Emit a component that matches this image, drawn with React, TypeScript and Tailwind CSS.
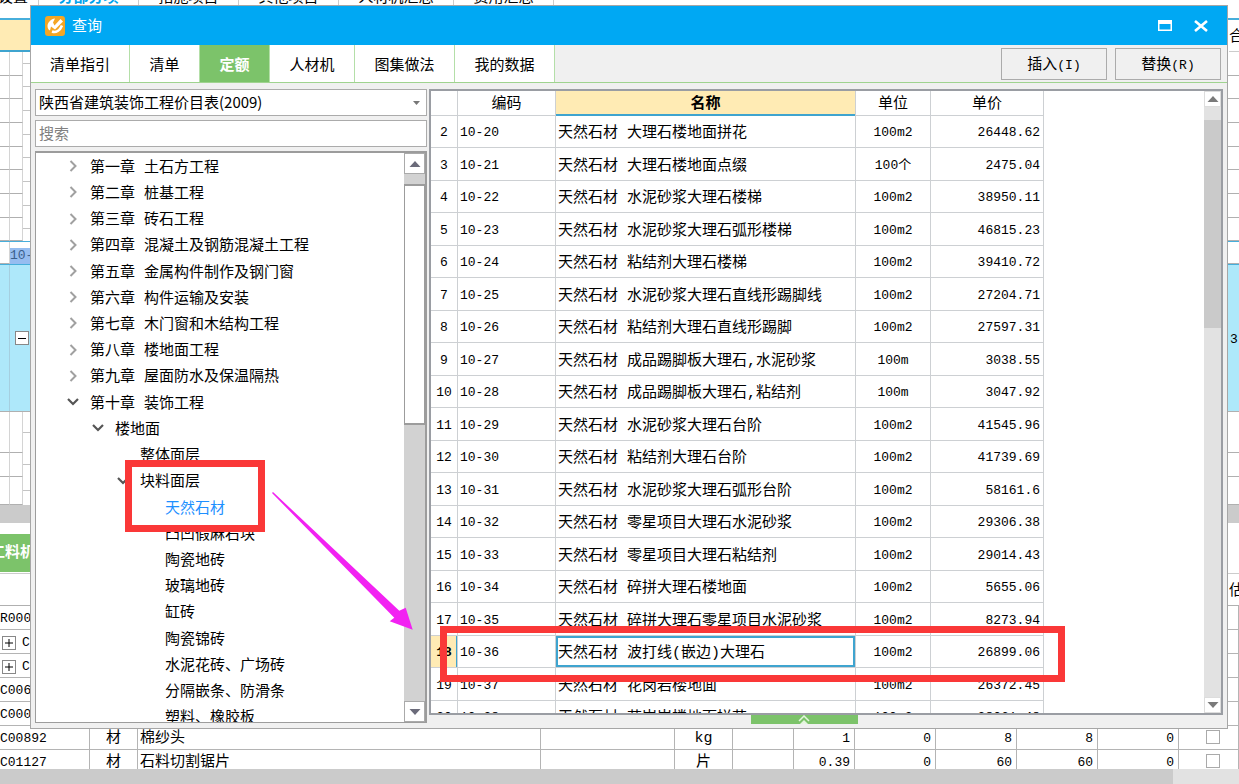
import { useState } from 'react';

type TreeItem = {
    label: string;
    level: number;
    state?: 'open' | 'closed';
};

const dialogTabs = [
    { name: '清单指引', width: 'w-[99px]' },
    { name: '清单', width: 'w-[70px]' },
    { name: '定额', width: 'w-[70px]' },
    { name: '人材机', width: 'w-[85px]' },
    { name: '图集做法', width: 'w-[100px]' },
    { name: '我的数据', width: 'w-[100px]' },
];

const treeItems: TreeItem[] = [
    { label: '第一章 土石方工程', level: 0, state: 'closed' },
    { label: '第二章 桩基工程', level: 0, state: 'closed' },
    { label: '第三章 砖石工程', level: 0, state: 'closed' },
    { label: '第四章 混凝土及钢筋混凝土工程', level: 0, state: 'closed' },
    { label: '第五章 金属构件制作及钢门窗', level: 0, state: 'closed' },
    { label: '第六章 构件运输及安装', level: 0, state: 'closed' },
    { label: '第七章 木门窗和木结构工程', level: 0, state: 'closed' },
    { label: '第八章 楼地面工程', level: 0, state: 'closed' },
    { label: '第九章 屋面防水及保温隔热', level: 0, state: 'closed' },
    { label: '第十章 装饰工程', level: 0, state: 'open' },
    { label: '楼地面', level: 1, state: 'open' },
    { label: '整体面层', level: 2 },
    { label: '块料面层', level: 2, state: 'open' },
    { label: '天然石材', level: 3 },
    { label: '凸凹假麻石块', level: 3 },
    { label: '陶瓷地砖', level: 3 },
    { label: '玻璃地砖', level: 3 },
    { label: '缸砖', level: 3 },
    { label: '陶瓷锦砖', level: 3 },
    { label: '水泥花砖、广场砖', level: 3 },
    { label: '分隔嵌条、防滑条', level: 3 },
    { label: '塑料、橡胶板', level: 3 },
];

const quotas = [
    { no: 2, code: '10-20', name: '天然石材 大理石楼地面拼花', unit: '100m2', price: '26448.62' },
    { no: 3, code: '10-21', name: '天然石材 大理石楼地面点缀', unit: '100个', price: '2475.04' },
    { no: 4, code: '10-22', name: '天然石材 水泥砂浆大理石楼梯', unit: '100m2', price: '38950.11' },
    { no: 5, code: '10-23', name: '天然石材 水泥砂浆大理石弧形楼梯', unit: '100m2', price: '46815.23' },
    { no: 6, code: '10-24', name: '天然石材 粘结剂大理石楼梯', unit: '100m2', price: '39410.72' },
    { no: 7, code: '10-25', name: '天然石材 水泥砂浆大理石直线形踢脚线', unit: '100m2', price: '27204.71' },
    { no: 8, code: '10-26', name: '天然石材 粘结剂大理石直线形踢脚', unit: '100m2', price: '27597.31' },
    { no: 9, code: '10-27', name: '天然石材 成品踢脚板大理石,水泥砂浆', unit: '100m', price: '3038.55' },
    { no: 10, code: '10-28', name: '天然石材 成品踢脚板大理石,粘结剂', unit: '100m', price: '3047.92' },
    { no: 11, code: '10-29', name: '天然石材 水泥砂浆大理石台阶', unit: '100m2', price: '41545.96' },
    { no: 12, code: '10-30', name: '天然石材 粘结剂大理石台阶', unit: '100m2', price: '41739.69' },
    { no: 13, code: '10-31', name: '天然石材 水泥砂浆大理石弧形台阶', unit: '100m2', price: '58161.6' },
    { no: 14, code: '10-32', name: '天然石材 零星项目大理石水泥砂浆', unit: '100m2', price: '29306.38' },
    { no: 15, code: '10-33', name: '天然石材 零星项目大理石粘结剂', unit: '100m2', price: '29014.43' },
    { no: 16, code: '10-34', name: '天然石材 碎拼大理石楼地面', unit: '100m2', price: '5655.06' },
    { no: 17, code: '10-35', name: '天然石材 碎拼大理石零星项目水泥砂浆', unit: '100m2', price: '8273.94' },
    { no: 18, code: '10-36', name: '天然石材 波打线(嵌边)大理石', unit: '100m2', price: '26899.06' },
    { no: 19, code: '10-37', name: '天然石材 花岗岩楼地面', unit: '100m2', price: '26372.45' },
    { no: 20, code: '10-38', name: '天然石材 花岗岩楼地面拼花', unit: '100m2', price: '28061.48' },
];

const materials = [
    { code: 'R000' },
    { code: 'C', expandable: true },
    { code: 'C', expandable: true },
    { code: 'C006' },
    { code: 'C000' },
    { code: 'C00892', type: '材', name: '棉纱头', unit: 'kg', values: ['1', '0', '8', '8', '0'] },
    { code: 'C01127', type: '材', name: '石料切割锯片', unit: '片', values: ['0.39', '0', '60', '60', '0'] },
];

const indents = ['pl-[31px]', 'pl-[56px]', 'pl-[81px]', 'pl-[106px]'];

const Chevron = ({ state }: { state?: 'open' | 'closed' }) => (
    <svg className="w-3 h-3 shrink-0" viewBox="0 0 12 12" fill="none">
        {state === 'closed' && <path d="M3.500 1L8.500 6L3.500 11" stroke="#a0a0a0" strokeWidth="2" />}
        {state === 'open' && <path d="M1 3L6 8L11 3" stroke="#555" strokeWidth="2.2" />}
    </svg>
);

const Triangle = ({ down, color }: { down?: boolean; color: string }) => (
    <svg className="w-3 h-2" viewBox="0 0 12 8" fill={color}>
        {down ? <path d="M0.5 1H11.5L6 7Z" /> : <path d="M0.5 7H11.5L6 1Z" />}
    </svg>
);

const SheetRow = ({ active }: { active?: boolean }) => (
    <div className={`flex min-h-0 ${active ? 'border-y border-[#47aedb]' : ''}`}>
        <div className="w-[10px] border-r border-b border-r-[#d4d4d4] border-b-[#b0b0b0]" />
        {active ? (
            <div className="w-5 self-end bg-[#96bdf0] text-[13px] text-[#3b5f8c] leading-4 overflow-hidden">10-</div>
        ) : (
            <>
                <div className="w-[13px] border-r border-b border-r-[#d4d4d4] border-b-[#b0b0b0]" />
                <div className="w-[7px]">
                    <div className="h-1/2 border-b border-[#c4c4c4]" />
                </div>
            </>
        )}
        <div className="flex-1 border-b border-[#b0b0b0]" />
    </div>
);

const Worksheet = () => (
    <div className="h-full flex flex-col">
        <nav className="flex shrink-0 -mt-3 h-8 leading-[22px] border-b-2 border-[#47aedb] text-center">
            <span className="w-[39px] border-r border-[#ccc] -indent-3">设置</span>
            <span className="w-[100px] border-r border-[#ccc] font-bold text-[#00a2ed]">分部分项</span>
            <span className="w-[100px] border-r border-[#ccc]">措施项目</span>
            <span className="w-[100px] border-r border-[#ccc]">其他项目</span>
            <span className="w-[115px] border-r border-[#ccc]">人材机汇总</span>
            <span className="w-[100px] border-r border-[#ccc]">费用汇总</span>
        </nav>
        <div className="flex justify-between shrink-0 h-8">
            <div className="w-[30px] bg-[#ffebb4] border-b-2 border-[#3fa4cf]" />
            <div className="w-[10px] overflow-hidden border-b border-[#ccc] leading-9">合</div>
        </div>
        <div className="grid auto-rows-fr shrink-0 h-[213px]">
            {[0, 1, 2, 3, 4, 5, 6, 7].map((row) => (
                <SheetRow key={row} />
            ))}
            <SheetRow active />
        </div>
        <div className="flex shrink-0 h-[147px] bg-[#aee8fa] items-center border-b border-[#b0b0b0]">
            <div className="w-[10px] h-full border-r border-[#a5cfe0]" />
            <button className="ml-[5px] w-[14px] h-[14px] bg-white border border-[#888] flex items-center justify-center" aria-label="折叠">
                <span className="w-2 h-px bg-black" />
            </button>
            <div className="ml-auto pt-1 w-[9px] overflow-hidden text-[13px]">3</div>
        </div>
        <div className="grid grid-rows-[41px_24px_28px] shrink-0">
            <SheetRow />
            <SheetRow />
            <SheetRow />
        </div>
        <div className="shrink-0 h-[18px] bg-[#cbcbcb]" />
        <div className="shrink-0 h-[51px] pt-[11px] border-b border-[#ccc]">
            <div className="w-[30px] h-[38px] bg-[#7cc36a] text-white font-bold leading-10 overflow-hidden whitespace-nowrap -indent-[10px]">工料机</div>
        </div>
        <div className="flex justify-end shrink-0 h-8 border-b border-[#b0b0b0]">
            <div className="w-[10px] overflow-hidden leading-9">估</div>
        </div>
        <div className="flex-1 min-h-0 overflow-hidden">
            <table className="w-full table-fixed border-separate border-spacing-0">
                <colgroup>
                    <col className="w-[90px]" />
                    <col className="w-[48px]" />
                    <col className="w-[403px]" />
                    <col className="w-[134px]" />
                    <col className="w-[58px]" />
                    <col className="w-[61px]" />
                    <col className="w-[61px]" />
                    <col className="w-[81px]" />
                    <col className="w-[81px]" />
                    <col className="w-[81px]" />
                    <col className="w-[81px]" />
                    <col />
                </colgroup>
                <tbody className="[&_td]:border-b [&_td]:border-r [&_td]:border-[#b4b4b4] [&_td]:h-6 [&_td]:pt-[2px] [&_td]:leading-5">
                    {materials.map((item, i) => (
                        <tr key={i}>
                            <td className="text-[13px]">
                                <div className="flex items-center">
                                    {item.expandable && (
                                        <button className="ml-[2px] mr-[6px] w-[14px] h-[14px] border border-[#888] bg-white flex items-center justify-center" aria-label="展开">
                                            <svg className="w-2 h-2" viewBox="0 0 8 8" stroke="#000"><path d="M0 4H8M4 0V8" /></svg>
                                        </button>
                                    )}
                                    {item.code}
                                </div>
                            </td>
                            <td className="text-center">{item.type}</td>
                            <td className="pl-[2px]">{item.name}</td>
                            <td />
                            <td className="text-center">{item.unit}</td>
                            <td />
                            {[0, 1, 2, 3, 4].map((n) => (
                                <td key={n} className="pr-1 text-right text-[13px]">{item.values?.[n]}</td>
                            ))}
                            <td>
                                {item.values && (
                                    <input type="checkbox" aria-label={item.name} className="block mb-1 ml-[27px] w-[14px] h-[14px] appearance-none border border-[#aaa] bg-white" />
                                )}
                            </td>
                        </tr>
                    ))}
                </tbody>
            </table>
        </div>
        <div className="shrink-0 h-[15px] bg-[#e2e2e2] pr-[66px]">
            <div className="h-full bg-[#cbcbcb]" />
        </div>
    </div>
);

const ChapterTree = () => {
    const [selected, setSelected] = useState('天然石材');

    return (
        <div className="flex-1 min-h-0 flex border border-t-2 border-[#9c9c9c] bg-white">
            <div className="flex-1 overflow-hidden">
                <ul className="grid auto-rows-fr h-[577px]">
                    {treeItems.map((item) => (
                        <li key={item.label} className={`flex items-center ${indents[item.level]}`}>
                            <button
                                className={`flex items-center gap-[11px] whitespace-nowrap leading-5 ${selected === item.label ? 'text-[#1e90ff]' : ''}`}
                                onClick={() => setSelected(item.label)}
                            >
                                <Chevron state={item.state} />
                                <span className="pt-[5px]">{item.label}</span>
                            </button>
                        </li>
                    ))}
                </ul>
            </div>
            <div className="w-[22px] flex flex-col bg-[#d2d2d2] border-r border-[#9c9c9c]">
                <button className="h-[21px] bg-white border border-[#aaa] flex items-center justify-center" aria-label="向上滚动">
                    <Triangle color="#6b6b7a" />
                </button>
                <div className="mt-[10px] h-[241px] bg-white border border-b-2 border-t-2 border-[#9c9c9c]" />
                <button className="mt-auto h-[21px] bg-white border border-[#aaa] flex items-center justify-center" aria-label="向下滚动">
                    <Triangle down color="#6b6b7a" />
                </button>
            </div>
        </div>
    );
};

const QuotaTable = () => (
    <div className="flex-1 min-w-0 flex justify-between border-2 border-[#9a9da3] bg-white overflow-hidden">
        <table className="w-[613px] table-fixed border-separate border-spacing-0 self-start whitespace-nowrap [&_td]:border-r [&_td]:border-b [&_td]:border-[#cdd0d3] [&_td]:leading-5">
            <thead>
                <tr className="h-[25px] [&_th]:font-normal [&_th]:leading-6 [&_th]:border-r [&_th]:border-b [&_th]:border-[#cdd0d3]">
                    <th className="w-[27px]" />
                    <th className="w-[98px]"><div className="h-6 leading-7">编码</div></th>
                    <th className="w-[300px] bg-[#ffebb4]">
                        <div className="-mb-px h-[25px] border-b-2 border-[#3fa4cf] font-bold leading-7">名称</div>
                    </th>
                    <th className="w-[75px]"><div className="h-6 leading-7">单位</div></th>
                    <th className="w-[113px]"><div className="h-6 leading-7">单价</div></th>
                </tr>
            </thead>
            <tbody>
                {quotas.map((row) => {
                    const active = row.no === 18;
                    return (
                        <tr key={row.no} className="odd:h-8 even:h-[33px] [&>td]:pt-[3px]">
                            <td className={active ? 'text-center text-[13px] font-bold bg-[#ffebb4] shadow-[inset_-1px_0_#3fa4cf]' : 'text-center text-[13px]'}>{row.no}</td>
                            <td className="pl-[2px] text-[13px]">{row.code}</td>
                            <td className={active ? 'pl-[2px] shadow-[inset_0_0_0_2px_#3fa4cf]' : 'pl-[2px]'}>
                                <div className="pt-[2px]">{row.name}</div>
                            </td>
                            <td className="text-center text-[13px]">{row.unit}</td>
                            <td className="pr-[3px] text-right text-[13px]">{row.price}</td>
                        </tr>
                    );
                })}
            </tbody>
        </table>
        <div className="w-[17px] flex flex-col bg-[#e2e2e2]">
            <button className="h-4 bg-white border border-[#ddd] flex items-center justify-center" aria-label="向上滚动">
                <Triangle color="#7a7a7a" />
            </button>
            <div className="mt-[13px] h-[208px] bg-[#cacaca]" />
            <button className="mt-auto h-4 bg-white border border-[#ddd] flex items-center justify-center" aria-label="向下滚动">
                <Triangle down color="#7a7a7a" />
            </button>
        </div>
    </div>
);

const QueryDialog = () => {
    const [tab, setTab] = useState('定额');

    return (
        <section className="absolute top-[5px] bottom-[55px] left-[30px] right-[11px] flex flex-col bg-[#f0f0f0] border border-[#a6a6a6]">
            <header className="flex items-center shrink-0 h-[39px] pl-[14px] pr-[19px] bg-[#00a8f3] text-white">
                <svg className="w-5 h-5" viewBox="0 0 20 20" fill="none">
                    <rect width="20" height="20" rx="3" fill="#f5a623" />
                    <path d="M2.500 9.500C3 6 6 3 10 2.500L8 6.500L9.500 9.500L15.500 3L18 5.500L10 13.500L6 10.500L5 14.500C3 13.500 2.500 12 2.500 9.500Z" fill="#fff" />
                    <path d="M7 15.500C11 17 15 14.500 17 9.500" stroke="#fff" strokeWidth="2.6" />
                </svg>
                <h1 className="ml-[7px] pt-[5px]">查询</h1>
                <button className="ml-auto" aria-label="最大化">
                    <svg className="w-[14px] h-[11px]" viewBox="0 0 14 11" fill="none">
                        <path d="M0 0H14V11H0ZM1.5 4V9.5H12.5V4Z" fill="#fff" fillRule="evenodd" />
                    </svg>
                </button>
                <button className="ml-[22px]" aria-label="关闭">
                    <svg className="w-[14px] h-3" viewBox="0 0 14 12" stroke="#fff" strokeWidth="2.6">
                        <path d="M1 1L13 11M13 1L1 11" />
                    </svg>
                </button>
            </header>
            <div className="flex items-center shrink-0 h-[38px] border-b border-[#9fd38f]">
                <div className="flex h-full" role="tablist">
                    {dialogTabs.map(({ name, width }) => (
                        <button
                            key={name}
                            role="tab"
                            aria-selected={tab === name}
                            className={`${width} pt-2 border-r border-[#b4dfa8] ${tab === name ? 'bg-[#7cc36a] text-white font-bold' : 'bg-white'}`}
                            onClick={() => setTab(name)}
                        >
                            {name}
                        </button>
                    ))}
                </div>
                <div className="ml-auto mr-[6px] flex gap-2">
                    <button className="w-[106px] h-8 pt-[5px] border border-[#ababab]">插入<span className="text-[13px]">(I)</span></button>
                    <button className="w-[106px] h-8 pt-[5px] border border-[#ababab]">替换<span className="text-[13px]">(R)</span></button>
                </div>
            </div>
            <div className="flex flex-1 min-h-0 gap-[2px] pt-[6px] pl-1 pr-1">
                <div className="w-[392px] shrink-0 flex flex-col gap-1 pb-[5px]">
                    <div className="relative">
                        <select aria-label="价目表" className="block w-full h-[27px] pl-[3px] appearance-none border border-[#ababab] bg-white font-['Noto_Sans_CJK_SC',sans-serif]">
                            <option>陕西省建筑装饰工程价目表(2009)</option>
                        </select>
                        <svg className="absolute right-[7px] top-3 w-[7px] h-1 pointer-events-none" viewBox="0 0 7 4" fill="#777">
                            <path d="M0 0H7L3.5 4Z" />
                        </svg>
                    </div>
                    <input aria-label="搜索" placeholder="搜索" className="h-[27px] pt-1 pl-[3px] border border-[#ababab] bg-white placeholder:text-[#808080]" />
                    <ChapterTree />
                </div>
                <div className="flex-1 min-w-0 flex flex-col">
                    <div className="flex flex-1 min-h-0">
                        <QuotaTable />
                    </div>
                    <div className="h-[13px] shrink-0 flex justify-center">
                        <button className="w-[107px] h-[9px] mr-11 bg-[#7cc36a] flex justify-center" aria-label="展开">
                            <svg className="w-3 h-[9px]" viewBox="0 0 12 9" fill="none" stroke="#e4f5de" strokeWidth="1.5">
                                <path d="M1 6L6 1L11 6" />
                                <path d="M3 9L6 6L9 9Z" fill="#fff" />
                            </svg>
                        </button>
                    </div>
                </div>
            </div>
        </section>
    );
};

// hand-drawn marks laid over the dialog
const Annotations = () => (
    <div className="absolute inset-0 pointer-events-none">
        <div className="absolute left-[125px] top-[460px] w-[140px] h-[72px] border-[7px] border-[#fa3838]" />
        <div className="absolute left-[440px] top-[626px] w-[625px] h-[56px] border-[7px] border-[#fa3838]" />
        <svg className="absolute left-[272px] top-[492px] w-[142px] h-[138px]" viewBox="0 0 142 138" fill="#f222f2">
            <path d="M0 1L1 0L127.300 118.700L133.700 115.700L140.700 137.700L117.700 129.300L122.300 125.700Z" />
        </svg>
    </div>
);

export default function App() {
    return (
        <main className="relative h-screen overflow-hidden bg-white text-black text-[15px] font-['Liberation_Mono','Noto_Sans_CJK_SC',monospace]">
            <Worksheet />
            <QueryDialog />
            <Annotations />
        </main>
    );
}
